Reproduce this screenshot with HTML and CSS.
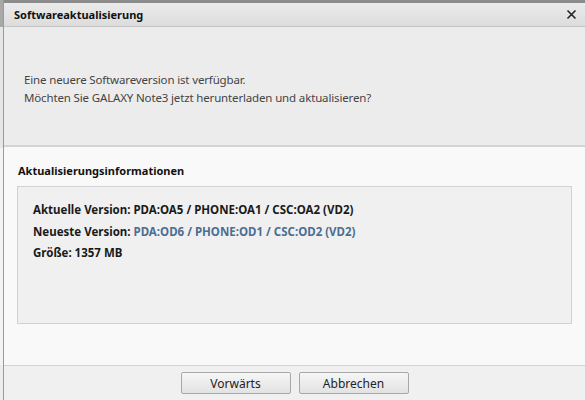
FILE: index.html
```html
<!DOCTYPE html>
<html lang="de">
<head>
    <meta charset="UTF-8">
    <title>Softwareaktualisierung</title>
    <link rel="stylesheet" href="styles.css">
</head>
<body>
    <div class="behind"></div>
    <div class="dialog">
        <div class="titlebar">
            <span class="title">Softwareaktualisierung</span>
            <svg class="close" width="11" height="11" viewBox="0 0 11 11">
                <path d="M1.5 1.5 L9.5 9.5 M9.5 1.5 L1.5 9.5" stroke="#222" stroke-width="1.6"/>
            </svg>
        </div>
        <div class="message">
            <p>Eine neuere Softwareversion ist verfügbar.</p>
            <p>Möchten Sie GALAXY Note3 jetzt herunterladen und aktualisieren?</p>
        </div>
        <div class="details">
            <h2>Aktualisierungsinformationen</h2>
            <div class="infobox">
                <p>Aktuelle Version: PDA:OA5 / PHONE:OA1 / CSC:OA2 (VD2)</p>
                <p>Neueste Version: <span class="new">PDA:OD6 / PHONE:OD1 / CSC:OD2 (VD2)</span></p>
                <p>Größe: 1357 MB</p>
            </div>
        </div>
        <div class="footer">
            <button>Vorwärts</button>
            <button>Abbrechen</button>
        </div>
    </div>
</body>
</html>
```

FILE: styles.css
```css
html, body { margin: 0; height: 100%; }
body { display: flex; font-family: "Noto Sans", "Open Sans", sans-serif; font-size: 11.5px; color: #222; background: #f4f4f4; overflow: hidden; }

/* Rand des Fensters dahinter */
.behind { width: 3px; border-right: 1px solid #9a9a9a; background: linear-gradient(#a8a8a8 0, #a8a8a8 27px, #e6e6e6 27px, #e6e6e6 148px, #f4f4f4 148px, #f4f4f4 365px, #ececec 365px); }

.dialog { flex: 1; display: flex; flex-direction: column; border-top: 3px solid #8c8c8c; }

.titlebar { height: 23px; display: flex; align-items: center; justify-content: space-between; padding: 0 8px 0 10px; background: linear-gradient(#ebebeb, #dcdcdc); border-bottom: 1px solid #c4c4c4; }
.title { font-weight: bold; font-size: 11px; color: #111; }
.close { display: block; }

.message { height: 120px; box-sizing: border-box; padding: 44px 20px 0; background: #ececec; border-bottom: 2px solid #d4d4d4; color: #444; letter-spacing: -0.15px; }
.message p { margin: 0; line-height: 18px; }

.details { flex: 1; background: #f9f9f9; padding: 16px 13px 0 14px; border-bottom: 1px solid #d4d4d4; }
.details h2 { margin: 0 0 7px; font-size: 11px; line-height: 16px; font-weight: bold; color: #111; }
.infobox { height: 138px; box-sizing: border-box; margin-left: -1px; background: #f0f0f0; border: 1px solid #d2d2d2; padding: 12px 15px; }
.infobox p { margin: 0; font-weight: bold; line-height: 21.5px; color: #1a1a1a; }
.infobox .new { color: #4b6e93; }

.footer { height: 34px; background: #f0f0f0; display: flex; align-items: center; justify-content: center; gap: 8px; }
.footer button { width: 110px; height: 22px; font-family: inherit; font-size: 12px; color: #222; border: 1px solid #a8a8a8; border-radius: 2px; background: linear-gradient(#f6f6f6, #e2e2e2); padding: 0; }
```
